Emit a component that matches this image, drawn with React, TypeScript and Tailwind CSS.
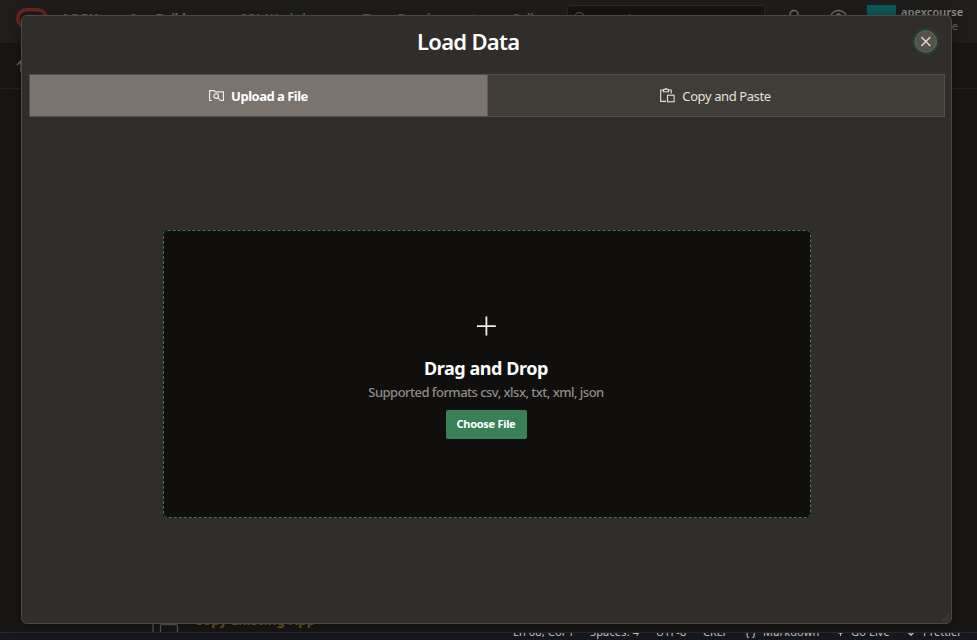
import type { ReactNode } from 'react';

function Header() {
  return (
    <header className="flex h-[43px] shrink-0 items-start bg-[#1f1e1c] text-[13px] font-semibold leading-[18px] text-[#696662]">
      <svg className="ml-4 mt-2 shrink-0" width="32" height="21" viewBox="0 0 32 21" fill="none">
        <rect x="1.7" y="1.7" width="28.6" height="17.6" rx="8.8" stroke="#70261d" strokeWidth="3.4" />
      </svg>
      <span className="ml-[13px] mt-[9px] w-[68px] font-bold tracking-[1.3px]">APEX</span>
      <span className="mt-[9px] w-[111px] font-bold tracking-[-0.6px] text-[#777470]">App Builder</span>
      <span className="mt-[9px] w-[123px] tracking-[-0.6px]">SQL Workshop</span>
      <span className="mt-[9px] w-[148px] whitespace-nowrap tracking-[-0.6px]">Team Development</span>
      <span className="mt-[9px] w-[56px] tracking-[-0.6px]">Gallery</span>
      <div className="mt-[5px] flex h-7 w-[198px] items-center gap-2 rounded-[3px] border border-[#2d2b29] bg-[#161513] pl-1.5 font-normal">
        <svg width="13" height="15" viewBox="0 0 13 15" fill="none" stroke="#696662">
          <circle cx="5.5" cy="5.5" r="5" />
          <path d="M9 9l3.5 3.5" />
        </svg>
        Search
      </div>
      <svg className="ml-5 mt-[9px]" width="18" height="20" viewBox="0 0 18 20" fill="none" stroke="#7c7975" strokeWidth="1.5">
        <circle cx="9" cy="5.5" r="4" />
        <path d="M2 18c0-9 14-9 14 0" />
      </svg>
      <svg className="ml-[26px] mt-[9px]" width="20" height="20" viewBox="0 0 20 20" fill="none" stroke="#7c7975" strokeWidth="1.5">
        <circle cx="9.5" cy="10" r="8.5" />
        <path d="M7 8c0-4 5-4 5 0 0 2-2.5 2-2.5 4" />
      </svg>
      <div className="ml-[18px] mt-[5px] h-7 w-[29px] bg-[#0b5c5b]" />
      <div className="ml-[5px] mt-[5px] flex w-[63px] flex-col text-[11px] leading-[14px]">
        <span className="tracking-[0.09px] text-[#92908d]">apexcourse</span>
        <span className="self-end pr-1.5 font-normal">apexcourse</span>
      </div>
    </header>
  );
}

function StatusBar() {
  return (
    <footer className="flex h-2 shrink-0 items-end overflow-hidden whitespace-nowrap border-t border-[#292a2c] bg-[#17181f] text-[11px] leading-4 text-[#c4c4c6]">
      <span className="ml-[513px] w-[77px] tracking-[0.15px]">Ln 68, Col 1</span>
      <span className="w-[66px] tracking-[0.15px]">Spaces: 4</span>
      <span className="w-[47px] tracking-[0.15px]">UTF-8</span>
      <span className="w-[42px]">CRLF</span>
      <span className="w-[18px]">{'{ }'}</span>
      <span className="w-[73px] tracking-[0.15px]">Markdown</span>
      <svg className="mb-[4px] mr-[6px]" width="9" height="9" viewBox="0 0 9 9" fill="none" stroke="#c4c4c6">
        <circle cx="4.5" cy="2.5" r="4" />
        <path d="M4.5 3v6" />
      </svg>
      <span className="w-[56px] tracking-[0.15px]">Go Live</span>
      <svg className="mb-[4px] mr-[8px]" width="8" height="8" viewBox="0 0 8 8" fill="none" stroke="#c4c4c6" strokeWidth="1.5">
        <path d="M1 4l3 3 3-3" />
      </svg>
      <span>Prettier</span>
    </footer>
  );
}

function Tab({ active = false, icon, children }: { active?: boolean; icon: ReactNode; children: ReactNode }) {
  return (
    <button
      className={`flex items-center justify-center gap-[7px] text-[13px] ${
        active ? 'w-[458px] border-r border-[#5f5852] bg-[#7b736d] font-bold tracking-[-0.5px] text-white' : 'flex-1 bg-[#403c37] pr-px tracking-[-0.4px] text-[#e4e1de]'
      }`}
    >
      {icon}
      <span className="pt-[2px]">{children}</span>
    </button>
  );
}

function UploadIcon() {
  return (
    <svg width="15" height="12" viewBox="0 0 15 12" fill="none" stroke="#eeeae7" strokeWidth="1.2">
      <path d="M3 10.5H.6V.6H5l1.5 1.2h7.9v8.7H12" />
      <circle cx="7.2" cy="6" r="2.3" />
      <path d="m8.8 7.7 3 3.2" />
    </svg>
  );
}

function PasteIcon() {
  return (
    <svg width="15" height="15" viewBox="0 0 15 15" fill="none" stroke="#e3dfdb" strokeWidth="1.1">
      <path d="M3.5 2H.7v11.4H6M8.5 2h2.7v3.5M3.5 3.8V1.5H5C5 .3 7 .3 7 1.5h1.5v2.3z" />
      <rect x="7.5" y="7.2" width="6.6" height="6.6" />
    </svg>
  );
}

function DropZone() {
  return (
    <div className="relative ml-[141px] mt-[113px] flex h-[288px] w-[648px] flex-col items-center rounded-[4px] bg-[#100f0d] pr-[2px] pt-[86px]">
      <svg className="absolute inset-0" width="648" height="288" fill="none">
        <rect x=".5" y=".5" width="647" height="287" rx="4" stroke="#398057" strokeDasharray="3 2" />
      </svg>
      <svg width="20" height="20" viewBox="0 0 20 20" fill="none" stroke="#f1efed" strokeWidth="1.8">
        <path d="M10.4 .5v19M1 10.2h18.8" />
      </svg>
      <h2 className="mt-5 whitespace-nowrap text-[18px] font-bold leading-6 tracking-[-0.45px] text-white">Drag and Drop</h2>
      <p className="mt-[3px] whitespace-nowrap text-[13px] font-medium leading-[18px] tracking-[-0.52px] text-[#8f8c89]">Supported formats csv, xlsx, txt, xml, json</p>
      <button className="mt-[9px] h-[29px] w-[81px] rounded-[2px] bg-[#398057] text-[11px] font-bold tracking-[-0.3px] text-white">Choose File</button>
    </div>
  );
}

function LoadDataDialog() {
  return (
    <section role="dialog" className="absolute left-[21px] top-[15px] h-[609px] w-[931px] rounded-[6px] border border-[#4a4744] bg-[#312d2a] shadow-[0_0_14px_rgba(0,0,0,0.35)]">
      <div className="flex h-[58px] items-start">
        <h1 className="ml-[395px] mt-[10px] flex-1 whitespace-nowrap text-[22px] font-semibold leading-[30px] tracking-[-0.7px] text-white">Load Data</h1>
        <button aria-label="Close" className="mr-[12px] mt-[12px]">
          <svg width="27" height="27" viewBox="0 0 27 27" fill="none">
            <circle cx="13.8" cy="13.5" r="12.6" stroke="#2f6247" strokeDasharray="1 1" />
            <circle cx="13.8" cy="13.5" r="10.8" fill="#595049" stroke="#398057" />
            <path d="m9.3 9 9 9m0-9-9 9" stroke="#dedbd8" strokeWidth="1.4" />
          </svg>
        </button>
      </div>
      <div className="ml-[7px] flex h-[43px] w-[916px] border border-[#534e48]">
        <Tab active icon={<UploadIcon />}>Upload a File</Tab>
        <Tab icon={<PasteIcon />}>Copy and Paste</Tab>
      </div>
      <DropZone />
      <svg className="absolute bottom-[2px] right-[2px]" width="7" height="7" stroke="#494541">
        <path d="M0 7 7 0M3 7l4-4M6 7l1-1" />
      </svg>
    </section>
  );
}

export default function App() {
  return (
    <main className="relative flex h-[640px] w-[977px] flex-col overflow-hidden bg-[#171614] font-['Noto_Sans','Open_Sans',sans-serif]">
      <Header />
      <div className="flex h-[46px] shrink-0 items-center border-b border-[#232220] pl-4">
        <svg width="12" height="12" viewBox="0 0 12 12" fill="none" stroke="#666d75" strokeWidth="1.5">
          <path d="M1 5 5 1l4 4M5 1v11" />
        </svg>
      </div>
      <div className="flex flex-1 items-end overflow-hidden">
        <svg className="ml-[152px]" width="28" height="24" viewBox="0 0 28 24" fill="none" stroke="#51565a" strokeWidth="1.3">
          <path d="M1 24V1h20v13" />
          <path d="M8.5 24v-5.5q0-2 2-2h13q2 0 2 2v5.5" />
        </svg>
        <span className="mb-[3px] ml-[14px] whitespace-nowrap text-[13px] font-bold leading-[18px] tracking-[0.35px] text-[#705322]">Copy Existing App</span>
      </div>
      <StatusBar />
      <LoadDataDialog />
    </main>
  );
}
